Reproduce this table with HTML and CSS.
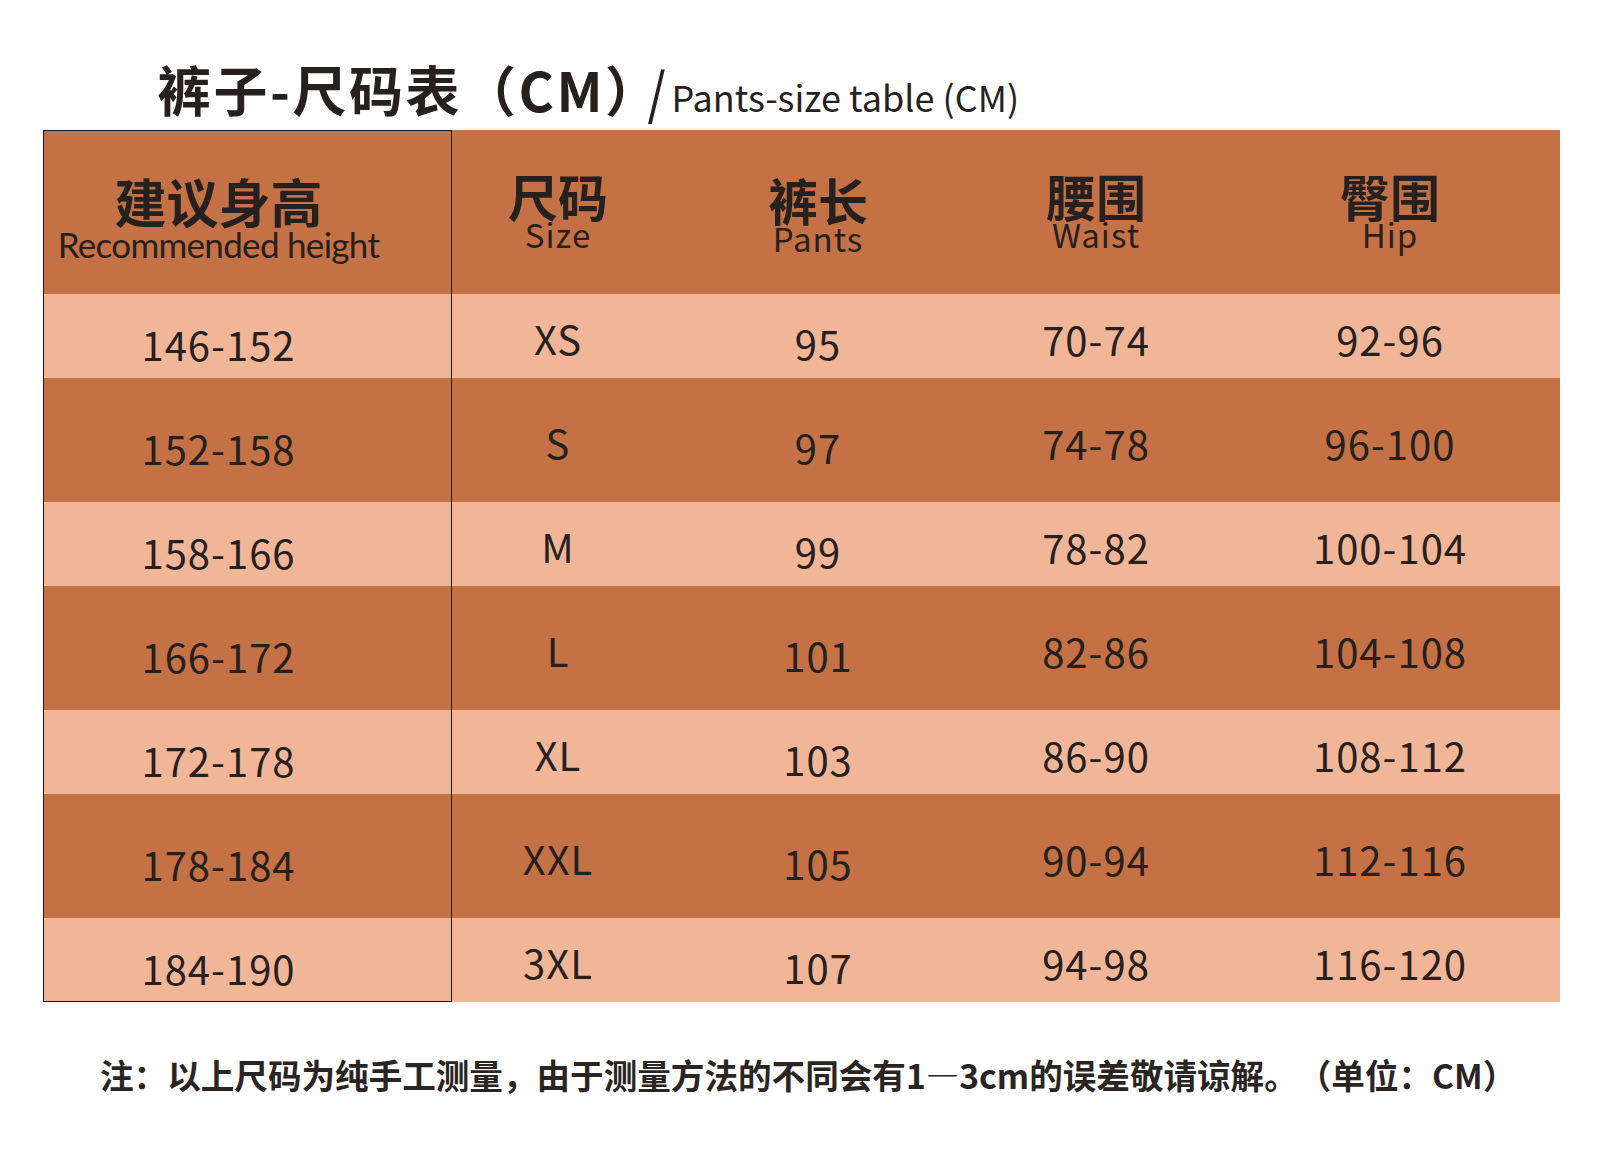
FILE: index.html
```html
<!DOCTYPE html>
<html lang="zh">
<head>
<meta charset="utf-8">
<title>裤子-尺码表</title>
<link rel="stylesheet" href="styles.css">
</head>
<body>
<div class="page">
  <div class="title">
    <span class="title-cn">裤子-尺码表（CM）</span>
    <span class="title-slash">/</span>
    <span class="title-en">Pants-size table (CM)</span>
  </div>
  <div class="table">
    <div class="row head">
      <div class="cell c1"><span class="cn cn-big">建议身高</span><span class="en en-tight">Recommended height</span></div>
      <div class="cell c2"><span class="cn">尺码</span><span class="en">Size</span></div>
      <div class="cell c3"><span class="cn">裤长</span><span class="en">Pants</span></div>
      <div class="cell c4"><span class="cn">腰围</span><span class="en">Waist</span></div>
      <div class="cell c5"><span class="cn">臀围</span><span class="en">Hip</span></div>
    </div>
    <div class="row light">
      <div class="cell c1">146-152</div><div class="cell c2">XS</div><div class="cell c3">95</div><div class="cell c4">70-74</div><div class="cell c5">92-96</div>
    </div>
    <div class="row dark">
      <div class="cell c1">152-158</div><div class="cell c2">S</div><div class="cell c3">97</div><div class="cell c4">74-78</div><div class="cell c5">96-100</div>
    </div>
    <div class="row light">
      <div class="cell c1">158-166</div><div class="cell c2">M</div><div class="cell c3">99</div><div class="cell c4">78-82</div><div class="cell c5">100-104</div>
    </div>
    <div class="row dark">
      <div class="cell c1">166-172</div><div class="cell c2">L</div><div class="cell c3">101</div><div class="cell c4">82-86</div><div class="cell c5">104-108</div>
    </div>
    <div class="row light">
      <div class="cell c1">172-178</div><div class="cell c2">XL</div><div class="cell c3">103</div><div class="cell c4">86-90</div><div class="cell c5">108-112</div>
    </div>
    <div class="row dark">
      <div class="cell c1">178-184</div><div class="cell c2">XXL</div><div class="cell c3">105</div><div class="cell c4">90-94</div><div class="cell c5">112-116</div>
    </div>
    <div class="row light last">
      <div class="cell c1">184-190</div><div class="cell c2">3XL</div><div class="cell c3">107</div><div class="cell c4">94-98</div><div class="cell c5">116-120</div>
    </div>
  </div>
  <p class="note">注：以上尺码为纯手工测量，由于测量方法的不同会有1—3cm的误差敬请谅解。（单位：CM）</p>
</div>
</body>
</html>
```

FILE: styles.css
```css
* { box-sizing: border-box; }
html, body { margin: 0; padding: 0; background: #ffffff; }
body {
  font-family: "Noto Sans CJK SC", "Noto Sans", sans-serif;
  color: #26211e;
  text-spacing-trim: space-all;
}
.page { width: 1600px; height: 1162px; padding-top: 58px; }

.title {
  display: flex;
  align-items: baseline;
  padding-left: 157px;
  height: 72px;
}
.title-cn { font-size: 54px; font-weight: 700; line-height: 60px; letter-spacing: 2.5px; }
.title-slash {
  font-size: 56px; font-weight: 400; line-height: 60px;
  margin-left: -16px;
  transform: skewX(4deg) translateY(2px);
}
.title-en { font-size: 36px; font-weight: 400; line-height: 60px; margin-left: 4px; }

.table { margin-left: 43px; width: 1517px; }
.row {
  display: grid;
  grid-template-columns: 409px 212px 308px 248px 340px;
}
.head { height: 164px; background: #c57146; }
.light { height: 84px; background: #f1b598; }
.dark { height: 124px; background: #c57146; }

.cell {
  display: flex;
  flex-direction: column;
  align-items: center;
  justify-content: center;
  font-size: 40px;
  line-height: 1;
  letter-spacing: 1px;
}
.row .c1 { border-left: 1px solid #1c1714; border-right: 1px solid #1c1714; padding-top: 16px; padding-right: 58px; }
.row .c2 { padding-top: 4px; }
.row .c3 { padding-top: 14px; }
.row .c4 { padding-top: 6px; }
.row .c5 { padding-top: 6px; }
.head .c1 { border-top: 1px solid #1c1714; padding-top: 12px; padding-right: 58px; }
.head .c2, .head .c4, .head .c5 { padding-top: 0; padding-bottom: 2px; }
.head .c3 { padding-top: 6px; }
.last .c1 { border-bottom: 1px solid #1c1714; }

.cn { font-size: 50px; font-weight: 700; line-height: 46px; letter-spacing: 0; }
.cn-big { font-size: 52px; line-height: 50px; }
.en { font-size: 33px; font-weight: 400; line-height: 32px; letter-spacing: 1px; }
.en-tight {
  font-family: Lato, "Noto Sans CJK SC", sans-serif;
  font-size: 35px; line-height: 36px; letter-spacing: -0.7px;
}

.note {
  margin: 53px 0 0 0;
  padding-left: 100px;
  font-size: 33.6px;
  font-weight: 700;
  line-height: 40px;
  color: #2a2522;
}
```
